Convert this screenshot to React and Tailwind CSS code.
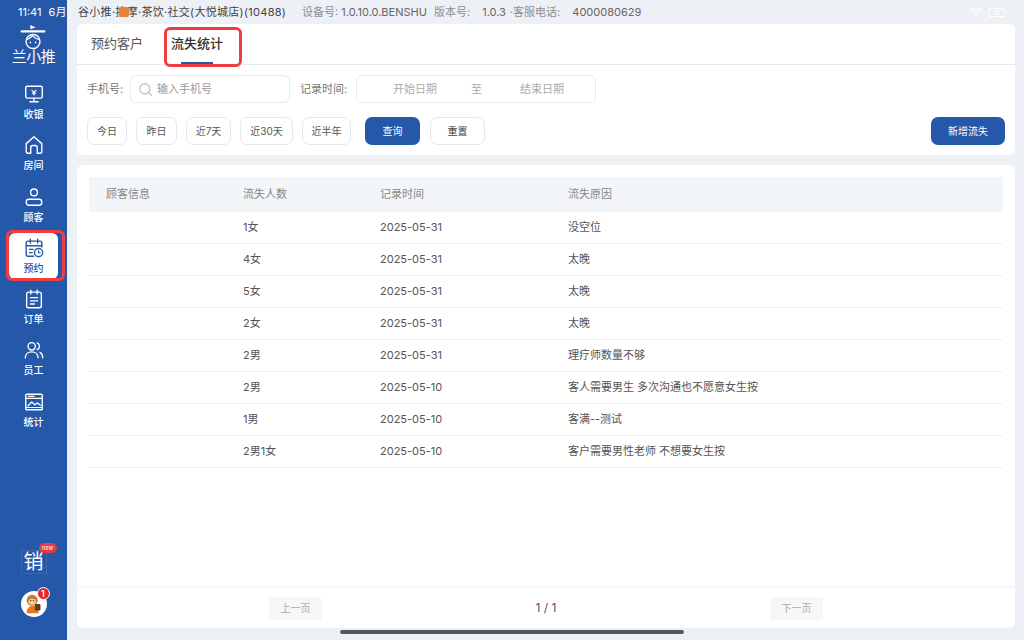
import React from "react";

const font = { fontFamily: '"Inter", "Noto Sans CJK SC", sans-serif' };

const Icon = ({ children, className = "" }) => (
  <svg
    viewBox="0 0 24 24"
    width="22"
    height="22"
    fill="none"
    stroke="currentColor"
    strokeWidth="1.5"
    strokeLinecap="round"
    strokeLinejoin="round"
    className={className}
  >
    {children}
  </svg>
);

const navItems = [
  {
    label: "收银",
    icon: (
      <>
        <rect x="3" y="3.500" width="18" height="13" rx="1.500" />
        <path d="M12 16.500v4M7.500 20.500h9" />
        <path d="M9.800 8l2.200 2 2.200-2M12 10v3M10.200 11h3.600" strokeWidth="1.300" />
      </>
    ),
  },
  {
    label: "房间",
    icon: (
      <path d="M3.500 10.500 12 3l8.500 7.500V19a2 2 0 0 1-2 2h-3v-6.500a2 2 0 0 0-2-2h-3a2 2 0 0 0-2 2V21h-3a2 2 0 0 1-2-2z" />
    ),
  },
  {
    label: "顾客",
    icon: (
      <>
        <circle cx="12" cy="7" r="3.700" />
        <rect x="3.500" y="14.500" width="17" height="6.500" rx="3" />
      </>
    ),
  },
  {
    label: "预约",
    active: true,
    icon: (
      <>
        <path d="M20.500 11V6.500a2 2 0 0 0-2-2h-13a2 2 0 0 0-2 2V19a2 2 0 0 0 2 2h6" />
        <path d="M8 2.500v4M16 2.500v4M3.500 9.500h17M7 13.500h4M7 17h3" />
        <circle cx="17" cy="17" r="4.500" />
        <path d="M17 15v2.200h1.800" strokeWidth="1.300" />
      </>
    ),
  },
  {
    label: "订单",
    icon: (
      <>
        <rect x="4" y="4.500" width="16" height="17" rx="2" />
        <path d="M8.500 2.500v4M15.500 2.500v4M8 10.500h8M8 14h8M8 17.500h4.500" />
      </>
    ),
  },
  {
    label: "员工",
    icon: (
      <>
        <circle cx="9.500" cy="8" r="4" />
        <path d="M2.500 20.500c0-4 3-6.500 7-6.500s7 2.500 7 6.500" />
        <path d="M15.500 4.300a4 4 0 0 1 0 7.400M18.500 14.500c2 1 3 3.200 3 6" />
      </>
    ),
  },
  {
    label: "统计",
    icon: (
      <>
        <rect x="3" y="3.500" width="18" height="17" rx="1" />
        <path d="M3 8h18M6 5.800h6" />
        <path d="M5.500 16l4-4 3.500 3 2.500-2 3.500 2.500" />
        <path d="M3 18h18" strokeWidth="1.200" />
      </>
    ),
  },
];

const rows = [
  ["1女", "2025-05-31", "没空位"],
  ["4女", "2025-05-31", "太晚"],
  ["5女", "2025-05-31", "太晚"],
  ["2女", "2025-05-31", "太晚"],
  ["2男", "2025-05-31", "理疗师数量不够"],
  ["2男", "2025-05-10", "客人需要男生 多次沟通也不愿意女生按"],
  ["1男", "2025-05-10", "客满--测试"],
  ["2男1女", "2025-05-10", "客户需要男性老师 不想要女生按"],
];

const quickRanges = [
  ["今日", "w-[40px]"],
  ["昨日", "w-[41px]"],
  ["近7天", "w-[45px]"],
  ["近30天", "w-[53px]"],
  ["近半年", "w-[49px]"],
];

const Logo = () => (
  <div className="flex flex-col items-center text-white">
    <svg viewBox="0 0 34 32" width="30" height="28" fill="none">
      <path d="M14 1l6 3-6 2z" fill="currentColor" />
      <path d="M4 8.500h26" stroke="currentColor" strokeWidth="2.500" strokeLinecap="round" />
      <circle cx="17" cy="20" r="8" stroke="currentColor" strokeWidth="1.600" />
      <path d="M9.500 18c3-1 5-3 7-4.500 2 2 5 3.500 8 4.500" stroke="currentColor" strokeWidth="1.400" />
      <circle cx="14" cy="21" r="1" fill="currentColor" />
      <circle cx="20" cy="21" r="1" fill="currentColor" />
    </svg>
    <span className="-mt-[3px] text-[15px] leading-[16px] tracking-[-0.5px] whitespace-nowrap">兰小推</span>
  </div>
);

const Avatar = () => (
  <div className="relative w-[26px] h-[26px] rounded-full bg-white flex items-center justify-center">
    <svg viewBox="0 0 26 26" width="24" height="24">
      <circle cx="11" cy="9" r="6" fill="#c9772a" />
      <ellipse cx="11" cy="10.500" rx="4" ry="3.200" fill="#f6d6a8" />
      <circle cx="9.500" cy="9.500" r="0.800" fill="#333" />
      <circle cx="12.500" cy="9.500" r="0.800" fill="#333" />
      <path d="M5 23c0-5 3-8 7-8s6 3 6 8z" fill="#e8761f" />
      <rect x="14" y="13" width="6" height="7" rx="1" fill="#5a3b28" />
    </svg>
    <span className="absolute -top-[4px] -right-[3px] w-[13px] h-[13px] rounded-full bg-[#e5252a] border border-white text-white text-[9px] leading-none font-semibold flex items-center justify-center">
      1
    </span>
  </div>
);

const Sidebar = () => (
  <aside className="w-[67px] shrink-0 h-full bg-[#2558a8] flex flex-col items-center pt-[24px]">
    <Logo />
    <nav className="mt-[14px] flex flex-col items-center">
      {navItems.map((item) => (
        <div
          key={item.label}
          className={
            item.active
              ? "w-[49px] h-[46px] rounded-md bg-white text-[#2558a8] flex flex-col items-center justify-center mb-[5.300px]"
              : "w-[49px] h-[46px] text-white flex flex-col items-center justify-center mb-[5.300px]"
          }
        >
          <Icon>{item.icon}</Icon>
          <span className="text-[10px] leading-[13px] mt-[3px] font-medium">{item.label}</span>
        </div>
      ))}
    </nav>
    <div className="mt-auto relative mb-[17px] text-white w-[26px] h-[24px] flex items-center justify-center border border-white/10">
      <span className="text-[20px] leading-none">销</span>
      <span className="absolute -top-[8px] -right-[11px] px-[3px] h-[10px] rounded-full bg-[#e23b40] text-white text-[6px] leading-[10px] italic">
        new
      </span>
    </div>
    <div className="mb-[23px]">
      <Avatar />
    </div>
  </aside>
);

const FilterButton = ({ className, children }) => (
  <button className={`h-[28px] rounded-[7px] text-[10px] ${className}`}>{children}</button>
);

const Filters = () => (
  <div className="px-[10px] pt-[10px]">
    <div className="flex items-center h-[28px] text-[11px]">
      <span className="text-[#777] w-[43px]">手机号:</span>
      <div className="w-[160px] h-[28px] border border-[#e9ebef] rounded-[6px] flex items-center pl-[7px] text-[#999]">
        <svg width="15" height="15" viewBox="0 0 24 24" fill="none" stroke="#b5b8bd" strokeWidth="1.800" strokeLinecap="round">
          <circle cx="11" cy="11" r="8" />
          <path d="m17 17 4.500 4.500" />
        </svg>
        <span className="ml-[4px]">输入手机号</span>
      </div>
      <span className="text-[#777] ml-[10px] w-[56px]">记录时间:</span>
      <div className="w-[240px] h-[28px] border border-[#e9ebef] rounded-[6px] flex items-center text-[#aaa] pl-[36px]">
        <span>开始日期</span>
        <span className="ml-[34px]">至</span>
        <span className="ml-[38px]">结束日期</span>
      </div>
    </div>
    <div className="flex items-center mt-[14px]">
      <div className="flex gap-[9px]">
        {quickRanges.map(([label, width]) => (
          <FilterButton key={label} className={`${width} border border-[#e6e8ec] text-[#555] bg-white`}>
            {label}
          </FilterButton>
        ))}
      </div>
      <FilterButton className="w-[55px] ml-[14px] bg-[#2558a8] text-white">查询</FilterButton>
      <FilterButton className="w-[55px] ml-[10px] border border-[#e6e8ec] text-[#444] bg-white">重置</FilterButton>
      <FilterButton className="w-[74px] ml-auto bg-[#2558a8] text-white">新增流失</FilterButton>
    </div>
  </div>
);

const Table = () => (
  <div className="flex-1 px-[12px] pt-[12px] text-[11px]">
    <div className="grid grid-cols-[154px_137px_188px_1fr] h-[35px] items-center bg-[#f3f6f8] text-[#888] rounded-t-[2px]">
      <span className="pl-[17px]">顾客信息</span>
      <span>流失人数</span>
      <span>记录时间</span>
      <span>流失原因</span>
    </div>
    {rows.map((row, i) => (
      <div
        key={i}
        className="grid grid-cols-[154px_137px_188px_1fr] h-[32px] items-center border-b border-[#f0f1f4] text-[#555]"
      >
        <span />
        <span>{row[0]}</span>
        <span>{row[1]}</span>
        <span>{row[2]}</span>
      </div>
    ))}
  </div>
);

const Pager = () => (
  <div className="h-[42px] border-t-2 border-[#f5f6fa] flex items-center justify-between px-[192px]">
    <button className="w-[53px] h-[23px] rounded-[3px] bg-[#f7f7f7] text-[#aaa] text-[10px]">上一页</button>
    <span className="text-[12px] text-[#555]">1 / 1</span>
    <button className="w-[53px] h-[23px] rounded-[3px] bg-[#f7f7f7] text-[#aaa] text-[10px]">下一页</button>
  </div>
);

const App = () => (
  <div style={font} className="relative w-[1024px] h-[640px] overflow-hidden bg-[#edf0f5] flex">
    <Sidebar />
    <main className="flex-1 flex flex-col pl-[10px] pr-[9px] pb-[12px]">
      {/* top info */}
      <div className="h-[24px] flex items-center text-[11px] whitespace-nowrap pl-[1px] text-[#8b8f96]">
        <span className="w-[225px] -ml-[1px] pl-[1px] text-[#444] tracking-[0.3px]">谷小推·按摩·茶饮·社交(大悦城店)(10488)</span>
        <span>设备号: <span className="text-[#666]">1.0.10.0.BENSHU</span></span>
        <span className="ml-[7px]">版本号: <span className="text-[#666] ml-[9px]">1.0.3</span></span>
        <span className="ml-[4px]">·客服电话: <span className="text-[#666] ml-[9px]">4000080629</span></span>
      </div>

      <section className="h-[131px] bg-white rounded-t-[6px] rounded-b-[6px]">
        <div className="h-[41px] border-b border-[#e8e9ec] flex items-center pl-[14px] text-[13px]">
          <span className="text-[#555]">预约客户</span>
          <span className="relative ml-[28px] h-full flex items-center font-medium text-[#333]">
            流失统计
            <span className="absolute bottom-0 left-[10px] w-[32px] h-[2px] bg-[#2558a8]" />
          </span>
        </div>
        <Filters />
      </section>

      <section className="flex-1 mt-[10px] bg-white rounded-[6px] flex flex-col">
        <Table />
        <Pager />
      </section>
    </main>

    {/* status bar */}
    <div className="absolute top-[5px] left-[18px] text-[11px] leading-[14px] text-white whitespace-nowrap">
      11:41 <span className="ml-[4px]">6月</span>
    </div>
    <span className="absolute top-[7px] left-[119px] w-[10px] h-[10px] rounded-[2px] bg-[#f08030]" />
    <div className="absolute top-[6px] right-[19px] flex items-center gap-[5px] text-white">
      <svg width="14" height="12" viewBox="0 0 24 20" fill="none" stroke="currentColor" strokeWidth="2.500" strokeLinecap="round">
        <path d="M2 7c6-5.500 14-5.500 20 0M6 11c3.500-3 8.500-3 12 0M9.500 15c1.500-1.200 3.500-1.200 5 0" />
      </svg>
      <span className="w-[17px] h-[9px] rounded-[2px] border border-white text-[6px] leading-[7px] text-center">41</span>
    </div>

    {/* red markup boxes */}
    <div className="absolute left-[164px] top-[27px] w-[78px] h-[40px] border-[3px] border-[#ef3e42] rounded-[6px]" />
    <div className="absolute left-[6px] top-[230px] w-[59px] h-[51px] border-[3px] border-[#ef3e42] rounded-[6px]" />

    {/* home indicator */}
    <div className="absolute left-[340px] top-[630px] w-[344px] h-[4px] rounded-full bg-[#55585c]" />
  </div>
);

export default App;
